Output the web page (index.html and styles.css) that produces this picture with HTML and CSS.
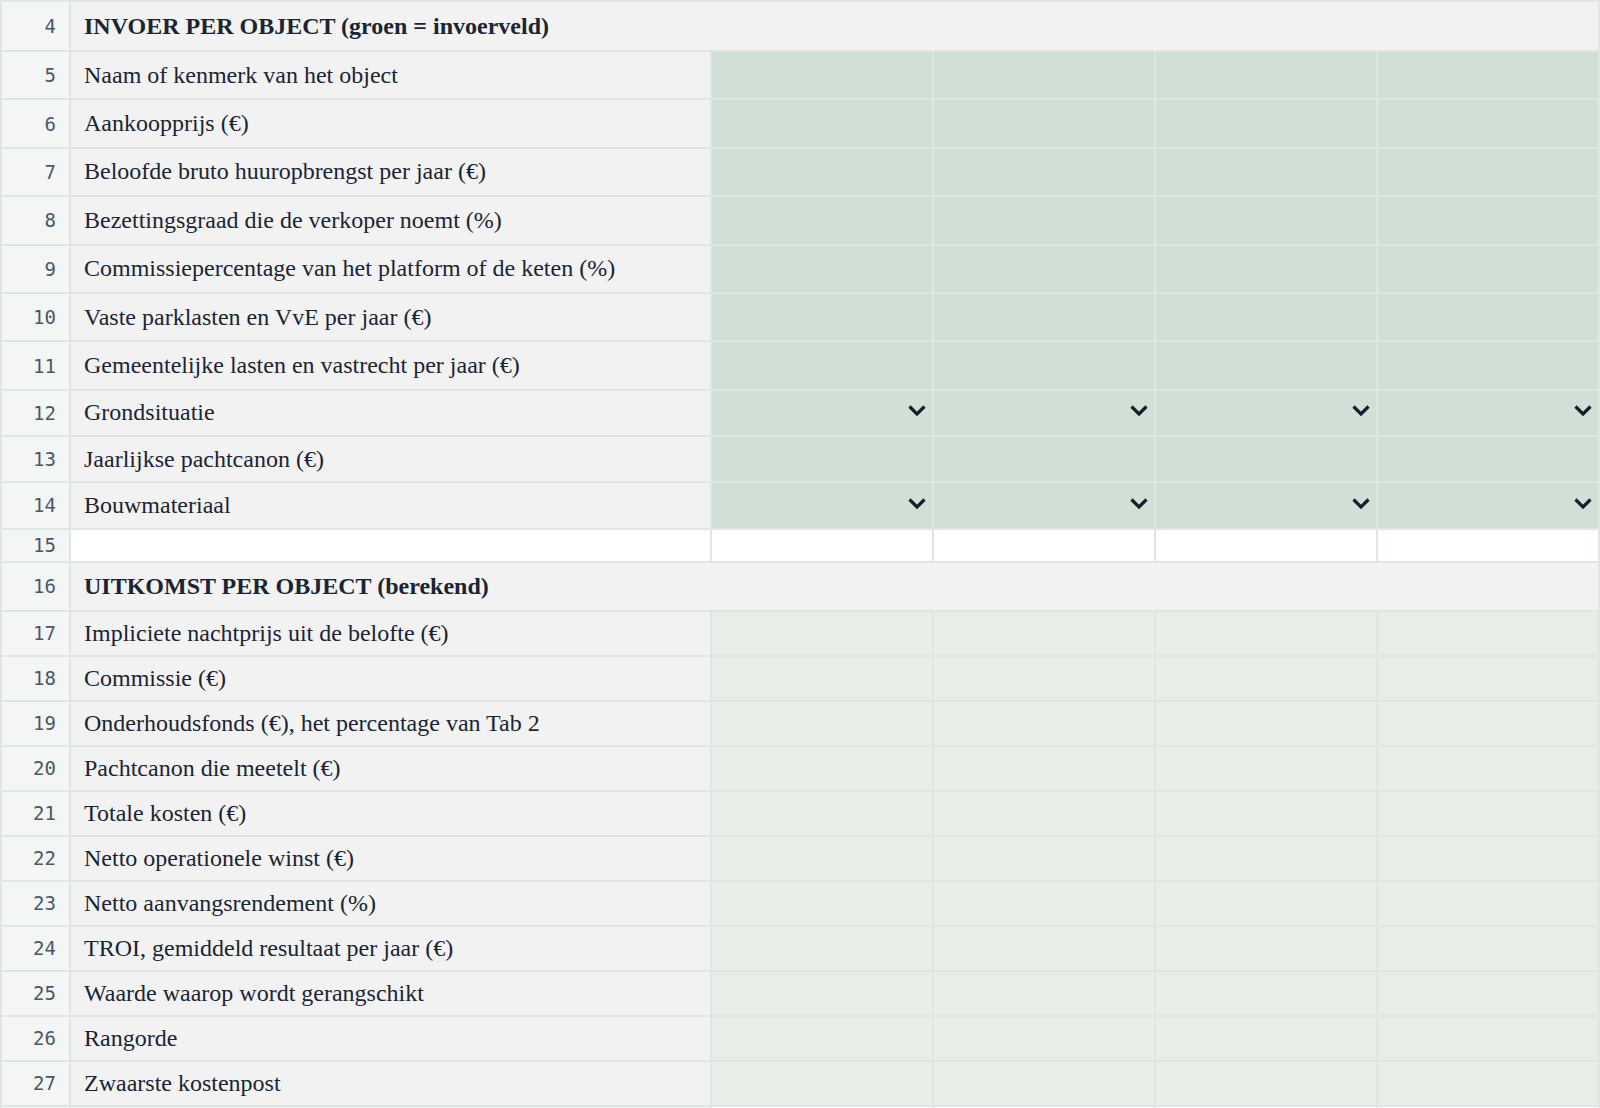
FILE: index.html
```html
<!DOCTYPE html>
<html lang="nl">
<head>
<meta charset="utf-8">
<title>Vergelijking objecten</title>
<link rel="stylesheet" href="styles.css">
</head>
<body>
<table class="sheet">
  <colgroup>
    <col class="c-num"><col class="c-label"><col class="c-val"><col class="c-val"><col class="c-val"><col class="c-val">
  </colgroup>
  <tbody>
    <tr class="r-head"><td class="num">4</td><td class="label head" colspan="5">INVOER PER OBJECT (groen = invoerveld)</td></tr>
    <tr class="r-in"><td class="num">5</td><td class="label">Naam of kenmerk van het object</td><td class="in"></td><td class="in"></td><td class="in"></td><td class="in"></td></tr>
    <tr class="r-in"><td class="num">6</td><td class="label">Aankoopprijs (€)</td><td class="in"></td><td class="in"></td><td class="in"></td><td class="in"></td></tr>
    <tr class="r-in"><td class="num">7</td><td class="label">Beloofde bruto huuropbrengst per jaar (€)</td><td class="in"></td><td class="in"></td><td class="in"></td><td class="in"></td></tr>
    <tr class="r-in"><td class="num">8</td><td class="label">Bezettingsgraad die de verkoper noemt (%)</td><td class="in"></td><td class="in"></td><td class="in"></td><td class="in"></td></tr>
    <tr class="r-in"><td class="num">9</td><td class="label">Commissiepercentage van het platform of de keten (%)</td><td class="in"></td><td class="in"></td><td class="in"></td><td class="in"></td></tr>
    <tr class="r-in"><td class="num">10</td><td class="label">Vaste parklasten en VvE per jaar (€)</td><td class="in"></td><td class="in"></td><td class="in"></td><td class="in"></td></tr>
    <tr class="r-in"><td class="num">11</td><td class="label">Gemeentelijke lasten en vastrecht per jaar (€)</td><td class="in"></td><td class="in"></td><td class="in"></td><td class="in"></td></tr>
    <tr class="r-sel"><td class="num">12</td><td class="label">Grondsituatie</td>
      <td class="in sel"><svg class="chev" viewBox="0 0 18 11" width="18" height="11"><path d="M1.5 1.5 L9 9 L16.5 1.5"/></svg></td>
      <td class="in sel"><svg class="chev" viewBox="0 0 18 11" width="18" height="11"><path d="M1.5 1.5 L9 9 L16.5 1.5"/></svg></td>
      <td class="in sel"><svg class="chev" viewBox="0 0 18 11" width="18" height="11"><path d="M1.5 1.5 L9 9 L16.5 1.5"/></svg></td>
      <td class="in sel"><svg class="chev" viewBox="0 0 18 11" width="18" height="11"><path d="M1.5 1.5 L9 9 L16.5 1.5"/></svg></td></tr>
    <tr class="r-sel"><td class="num">13</td><td class="label">Jaarlijkse pachtcanon (€)</td><td class="in"></td><td class="in"></td><td class="in"></td><td class="in"></td></tr>
    <tr class="r-sel"><td class="num">14</td><td class="label">Bouwmateriaal</td>
      <td class="in sel"><svg class="chev" viewBox="0 0 18 11" width="18" height="11"><path d="M1.5 1.5 L9 9 L16.5 1.5"/></svg></td>
      <td class="in sel"><svg class="chev" viewBox="0 0 18 11" width="18" height="11"><path d="M1.5 1.5 L9 9 L16.5 1.5"/></svg></td>
      <td class="in sel"><svg class="chev" viewBox="0 0 18 11" width="18" height="11"><path d="M1.5 1.5 L9 9 L16.5 1.5"/></svg></td>
      <td class="in sel"><svg class="chev" viewBox="0 0 18 11" width="18" height="11"><path d="M1.5 1.5 L9 9 L16.5 1.5"/></svg></td></tr>
    <tr class="r-empty"><td class="num">15</td><td class="blank"></td><td class="blank"></td><td class="blank"></td><td class="blank"></td><td class="blank"></td></tr>
    <tr class="r-head2"><td class="num">16</td><td class="label head" colspan="5">UITKOMST PER OBJECT (berekend)</td></tr>
    <tr class="r-out"><td class="num">17</td><td class="label">Impliciete nachtprijs uit de belofte (€)</td><td class="out"></td><td class="out"></td><td class="out"></td><td class="out"></td></tr>
    <tr class="r-out"><td class="num">18</td><td class="label">Commissie (€)</td><td class="out"></td><td class="out"></td><td class="out"></td><td class="out"></td></tr>
    <tr class="r-out"><td class="num">19</td><td class="label">Onderhoudsfonds (€), het percentage van Tab 2</td><td class="out"></td><td class="out"></td><td class="out"></td><td class="out"></td></tr>
    <tr class="r-out"><td class="num">20</td><td class="label">Pachtcanon die meetelt (€)</td><td class="out"></td><td class="out"></td><td class="out"></td><td class="out"></td></tr>
    <tr class="r-out"><td class="num">21</td><td class="label">Totale kosten (€)</td><td class="out"></td><td class="out"></td><td class="out"></td><td class="out"></td></tr>
    <tr class="r-out"><td class="num">22</td><td class="label">Netto operationele winst (€)</td><td class="out"></td><td class="out"></td><td class="out"></td><td class="out"></td></tr>
    <tr class="r-out"><td class="num">23</td><td class="label">Netto aanvangsrendement (%)</td><td class="out"></td><td class="out"></td><td class="out"></td><td class="out"></td></tr>
    <tr class="r-out"><td class="num">24</td><td class="label">TROI, gemiddeld resultaat per jaar (€)</td><td class="out"></td><td class="out"></td><td class="out"></td><td class="out"></td></tr>
    <tr class="r-out"><td class="num">25</td><td class="label">Waarde waarop wordt gerangschikt</td><td class="out"></td><td class="out"></td><td class="out"></td><td class="out"></td></tr>
    <tr class="r-out"><td class="num">26</td><td class="label">Rangorde</td><td class="out"></td><td class="out"></td><td class="out"></td><td class="out"></td></tr>
    <tr class="r-out"><td class="num">27</td><td class="label">Zwaarste kostenpost</td><td class="out"></td><td class="out"></td><td class="out"></td><td class="out"></td></tr>
    <tr class="r-out"><td class="num"></td><td class="label"></td><td class="blank"></td><td class="blank"></td><td class="blank"></td><td class="blank"></td></tr>
  </tbody>
</table>
</body>
</html>
```

FILE: styles.css
```css
html, body {
  margin: 0;
  padding: 0;
  background: #ffffff;
}

.sheet {
  width: 1600px;
  table-layout: fixed;
  border-collapse: separate;
  border-spacing: 2px;
  background: #dfe6e3;
  font-family: "Liberation Serif", "Times New Roman", serif;
  font-size: 24px;
  color: #1b2532;
}

.c-num { width: 67px; }
.c-label { width: 639px; }
.c-val { width: 220px; }

.sheet td {
  padding: 0;
  vertical-align: middle;
}

.num {
  background: #f4f6f5;
  text-align: right;
  padding-right: 13px !important;
  font-family: "DejaVu Sans Mono", "Liberation Mono", monospace;
  font-size: 19px;
  color: #4a5868;
}

.label {
  background: #f2f2f2;
  padding-left: 13px !important;
  white-space: nowrap;
  overflow: hidden;
}

.head {
  font-weight: bold;
}

.in { background: #d1e0d7; }
.out { background: #e7eee8; }
.blank { background: #ffffff; }

.sel {
  padding-right: 6px !important;
}

.chev {
  display: block;
  margin-left: auto;
  margin-bottom: 4px;
  fill: none;
  stroke: #16202d;
  stroke-width: 3.2;
  stroke-linecap: butt;
  stroke-linejoin: miter;
}

.r-head { height: 48px; }
.r-in { height: 46.4px; }
.r-sel { height: 44.3px; }
.r-empty { height: 31px; }
.r-head2 { height: 47px; }
.r-out { height: 43px; }
```
